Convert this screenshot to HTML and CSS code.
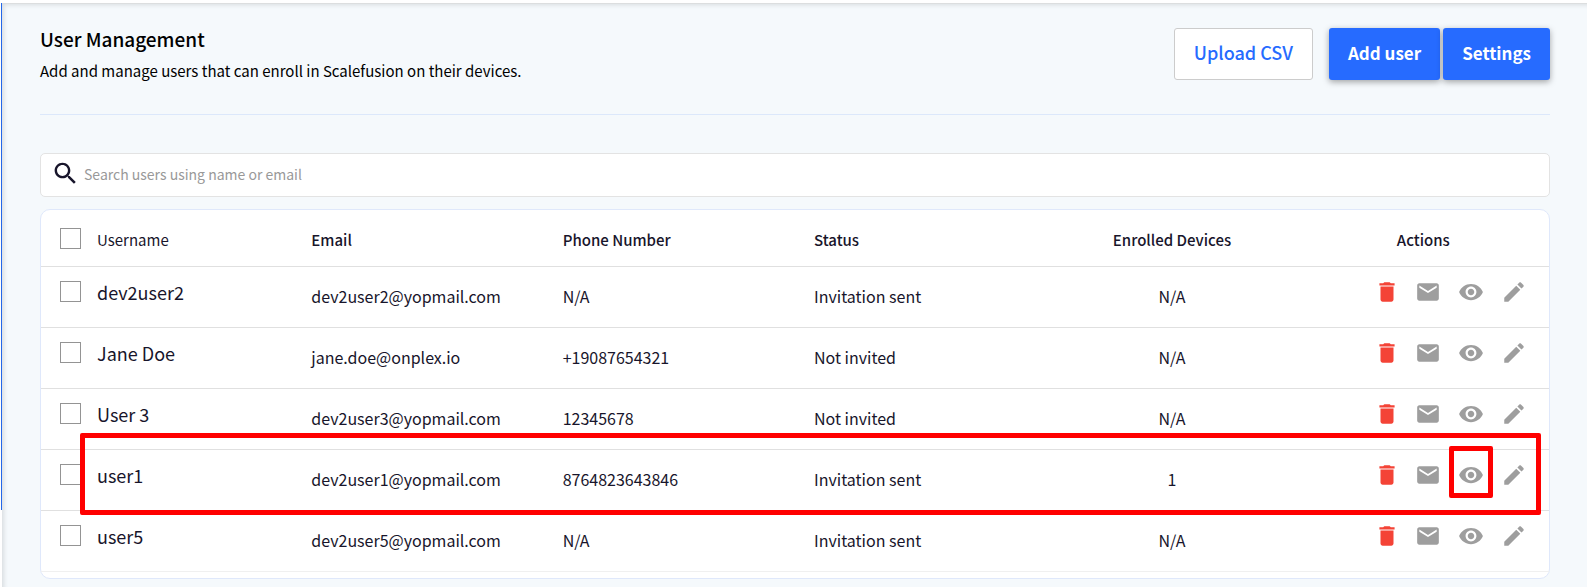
FILE: index.html
```html
<!DOCTYPE html>
<html lang="en">
<head>
  <meta charset="UTF-8">
  <meta name="viewport" content="width=device-width, initial-scale=1">
  <title>User Management</title>
  <link rel="stylesheet" href="styles.css">
</head>
<body>
  <svg class="sprite" aria-hidden="true">
    <symbol id="trash" viewBox="0 0 24 24"><path d="M6 19c0 1.1.9 2 2 2h8c1.100 0 2-.9 2-2V7H6v12zM19 4h-3.500l-1-1h-5l-1 1H5v2h14V4z"/></symbol>
    <symbol id="mail" viewBox="0 0 24 24"><path d="M20 4H4c-1.100 0-1.990.9-1.990 2L2 18c0 1.100.9 2 2 2h16c1.100 0 2-.9 2-2V6c0-1.100-.9-2-2-2zm0 4l-8 5-8-5V6l8 5 8-5v2z"/></symbol>
    <symbol id="eye" viewBox="0 0 24 24"><path d="M12 4.500C7 4.500 2.730 7.610 1 12c1.730 4.390 6 7.500 11 7.500s9.270-3.110 11-7.500c-1.730-4.390-6-7.500-11-7.500zM12 17c-2.760 0-5-2.240-5-5s2.240-5 5-5 5 2.240 5 5-2.240 5-5 5zm0-8c-1.660 0-3 1.340-3 3s1.340 3 3 3 3-1.340 3-3-1.340-3-3-3z"/></symbol>
    <symbol id="pencil" viewBox="0 0 24 24"><path d="M3 17.250V21h3.750L17.810 9.940l-3.750-3.750L3 17.250zM20.710 7.040c.39-.39.39-1.020 0-1.410l-2.340-2.340c-.39-.39-1.020-.39-1.410 0l-1.830 1.830 3.750 3.750 1.830-1.830z"/></symbol>
    <symbol id="search" viewBox="0 0 24 24"><path d="M15.500 14h-.79l-.28-.27C15.410 12.590 16 11.110 16 9.500 16 5.910 13.090 3 9.500 3S3 5.910 3 9.500 5.910 16 9.500 16c1.610 0 3.090-.59 4.230-1.570l.27.28v.79l5 4.990L20.490 19l-4.990-5zm-6 0C7.010 14 5 11.990 5 9.500S7.010 5 9.500 5 14 7.010 14 9.500 11.990 14 9.500 14z"/></symbol>
  </svg>

  <main class="page">
    <header class="page-header">
      <div>
        <h1>User Management</h1>
        <p>Add and manage users that can enroll in Scalefusion on their devices.</p>
      </div>
      <div class="buttons">
        <button class="btn outline" type="button">Upload CSV</button>
        <button class="btn primary" type="button">Add user</button>
        <button class="btn primary" type="button">Settings</button>
      </div>
    </header>

    <label class="search">
      <svg class="search-icon" aria-hidden="true"><use href="#search"/></svg>
      <input type="text" placeholder="Search users using name or email" aria-label="Search users">
    </label>

    <div class="card">
      <table>
        <thead>
          <tr>
            <th scope="col"><div class="user"><input type="checkbox" id="all"><label for="all">Username</label></div></th>
            <th scope="col">Email</th>
            <th scope="col">Phone Number</th>
            <th scope="col">Status</th>
            <th scope="col" class="center">Enrolled Devices</th>
            <th scope="col" class="center">Actions</th>
          </tr>
        </thead>
        <tbody>
          <tr>
            <td><div class="user"><input type="checkbox" id="u1"><label for="u1">dev2user2</label></div></td>
            <td>dev2user2@yopmail.com</td>
            <td>N/A</td>
            <td>Invitation sent</td>
            <td class="center">N/A</td>
            <td><div class="actions">
              <button type="button" class="delete" aria-label="Delete"><svg><use href="#trash"/></svg></button>
              <button type="button" aria-label="Send invite"><svg><use href="#mail"/></svg></button>
              <button type="button" aria-label="View"><svg><use href="#eye"/></svg></button>
              <button type="button" aria-label="Edit"><svg><use href="#pencil"/></svg></button>
            </div></td>
          </tr>
          <tr>
            <td><div class="user"><input type="checkbox" id="u2"><label for="u2">Jane Doe</label></div></td>
            <td>jane.doe@onplex.io</td>
            <td>+19087654321</td>
            <td>Not invited</td>
            <td class="center">N/A</td>
            <td><div class="actions">
              <button type="button" class="delete" aria-label="Delete"><svg><use href="#trash"/></svg></button>
              <button type="button" aria-label="Send invite"><svg><use href="#mail"/></svg></button>
              <button type="button" aria-label="View"><svg><use href="#eye"/></svg></button>
              <button type="button" aria-label="Edit"><svg><use href="#pencil"/></svg></button>
            </div></td>
          </tr>
          <tr>
            <td><div class="user"><input type="checkbox" id="u3"><label for="u3">User 3</label></div></td>
            <td>dev2user3@yopmail.com</td>
            <td>12345678</td>
            <td>Not invited</td>
            <td class="center">N/A</td>
            <td><div class="actions">
              <button type="button" class="delete" aria-label="Delete"><svg><use href="#trash"/></svg></button>
              <button type="button" aria-label="Send invite"><svg><use href="#mail"/></svg></button>
              <button type="button" aria-label="View"><svg><use href="#eye"/></svg></button>
              <button type="button" aria-label="Edit"><svg><use href="#pencil"/></svg></button>
            </div></td>
          </tr>
          <tr class="marked">
            <td><span class="row-mark"></span><div class="user"><input type="checkbox" id="u4"><label for="u4">user1</label></div></td>
            <td>dev2user1@yopmail.com</td>
            <td>8764823643846</td>
            <td>Invitation sent</td>
            <td class="center">1</td>
            <td><div class="actions">
              <button type="button" class="delete" aria-label="Delete"><svg><use href="#trash"/></svg></button>
              <button type="button" aria-label="Send invite"><svg><use href="#mail"/></svg></button>
              <button type="button" aria-label="View"><svg><use href="#eye"/></svg><span class="icon-mark"></span></button>
              <button type="button" aria-label="Edit"><svg><use href="#pencil"/></svg></button>
            </div></td>
          </tr>
          <tr>
            <td><div class="user"><input type="checkbox" id="u5"><label for="u5">user5</label></div></td>
            <td>dev2user5@yopmail.com</td>
            <td>N/A</td>
            <td>Invitation sent</td>
            <td class="center">N/A</td>
            <td><div class="actions">
              <button type="button" class="delete" aria-label="Delete"><svg><use href="#trash"/></svg></button>
              <button type="button" aria-label="Send invite"><svg><use href="#mail"/></svg></button>
              <button type="button" aria-label="View"><svg><use href="#eye"/></svg></button>
              <button type="button" aria-label="Edit"><svg><use href="#pencil"/></svg></button>
            </div></td>
          </tr>
        </tbody>
      </table>
    </div>
  </main>
</body>
</html>
```
FILE: styles.css
```css
* {
  box-sizing: border-box;
}
body {
  margin: 0;
  padding: 3px 0 0 1px;
  background: linear-gradient(#2467e8, #2467e8) 1px 3px / 1px 507px no-repeat #fff;
  font-family: "Noto Sans CJK SC", "Open Sans", sans-serif;
  font-size: 16px;
  color: #18152b;
}
button, input {
  font-family: inherit;
}
.sprite {
  display: none;
}
.page {
  min-height: calc(100vh - 3px);
  margin-left: 1px;
  padding: 25px 37px 8px 38px;
  background: #f5f9fc;
  box-shadow: inset 0 1px 0 #dcdedf, inset 3px 3px 4px -1px #d9dde0;
}
.page-header {
  display: flex;
  justify-content: space-between;
  align-items: flex-start;
  height: 87px;
  border-bottom: 1px solid #dce8fb;
  color: #000;
}
h1 {
  margin: 0;
  font-size: 19px;
  line-height: 22px;
  font-weight: 500;
}
.page-header p {
  margin: 9px 0 0;
  font-size: 15px;
  line-height: 24px;
}
.buttons {
  display: flex;
  gap: 3px;
}
.btn {
  height: 52px;
  padding: 0 19px 4px;
  border: none;
  border-radius: 3px;
  font-size: 18px;
  font-weight: 500;
  cursor: pointer;
}
.outline {
  margin-right: 13px;
  border: 1px solid #ccc;
  background: #fff;
  color: #266bff;
}
.primary {
  background: #266bff;
  color: #fff;
  font-weight: 700;
  font-size: 17px;
  box-shadow: 0 2px 6px rgba(0, 0, 0, 0.35);
}

.search {
  display: flex;
  align-items: center;
  height: 44px;
  margin: 38px 0 12px;
  padding: 0 10px 3px;
  border: 1px solid #e3e3e3;
  border-radius: 5px;
  background: #fff;
}
.search-icon {
  width: 29px;
  height: 29px;
  fill: #18152b;
}
.search input {
  flex: 1;
  padding: 0 4px;
  border: none;
  outline: none;
  font-size: 14px;
}
.search input::placeholder {
  color: #999;
}

.card {
  padding-bottom: 6px;
  border: 1px solid #dfe8fb;
  border-radius: 10px;
  background: #fff;
}
table {
  width: 100%;
  table-layout: fixed;
  border-collapse: separate;
  border-spacing: 0;
}
th, td {
  padding: 0 19px;
  border-bottom: 1px solid #e0e0e0;
  text-align: left;
}
th {
  height: 57px;
  padding-top: 3px;
  font-size: 15px;
  font-weight: 500;
}
td {
  height: 61px;
  padding-bottom: 2px;
}
tr:last-child td {
  border-color: #f0f0f0;
}
th.center, td.center {
  text-align: center;
}
.user {
  display: flex;
  align-items: center;
  gap: 16px;
}
th .user {
  font-weight: 400;
}
td .user {
  padding-bottom: 8px;
  font-size: 18px;
}
.user input {
  appearance: none;
  width: 21px;
  height: 21px;
  margin: 0 0 2px;
  border: 1px solid #949494;
  background: #fff;
}
.actions {
  display: flex;
  justify-content: flex-end;
  gap: 17px;
  padding: 0 3px 8px 0;
}
.actions button {
  position: relative;
  display: flex;
  justify-content: center;
  width: 26px;
  padding: 0;
  border: none;
  background: none;
  fill: #9e9e9e;
  cursor: pointer;
}
.actions svg {
  flex: none;
  width: 26px;
  height: 26px;
}
.actions .delete {
  width: 22px;
  fill: #f44336;
}

/* highlight frames */
.marked {
  position: relative;
}
.row-mark, .icon-mark {
  position: absolute;
  z-index: 1;
  border: 5px solid #f00;
  border-radius: 2px;
  pointer-events: none;
}
.row-mark {
  inset: -17px 8px -4px 39px;
}
.icon-mark {
  inset: -16px -9px -10px -9px;
}
```
